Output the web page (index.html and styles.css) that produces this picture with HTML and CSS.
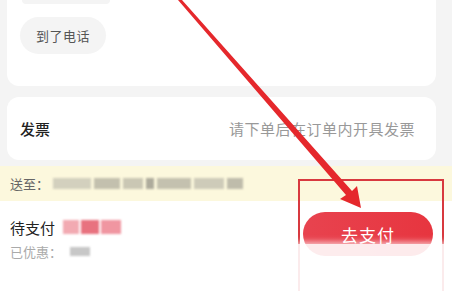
FILE: index.html
```html
<!DOCTYPE html>
<html lang="zh">
<head>
<meta charset="utf-8">
<link rel="stylesheet" href="styles.css">
</head>
<body>
<div class="page">
  <div class="card-top">
    <div class="chip-prev"></div>
    <div class="chip">到了电话</div>
  </div>
  <div class="card-invoice">
    <span class="inv-label">发票</span>
    <span class="inv-hint">请下单后在订单内开具发票</span>
  </div>
  <div class="addr">
    <span class="addr-label">送至：</span>
    <span class="blur-row">
      <i class="b b1"></i><i class="b b2"></i><i class="b b3"></i><i class="b b4"></i><i class="b b5"></i><i class="b b6"></i><i class="b b7"></i>
    </span>
  </div>
  <div class="pay">
    <div class="pay-info">
      <div class="pay-line">
        <span class="pay-label">待支付</span>
        <span class="price-blur"><i class="p p1"></i><i class="p p2"></i><i class="p p3"></i></span>
      </div>
      <div class="disc-line">
        <span class="disc-label">已优惠：</span>
        <span class="disc-blur"></span>
      </div>
    </div>
    <button class="pay-btn">去支付</button>
  </div>

  <div class="highlight-box"></div>
  <svg class="arrow" width="452" height="291" viewBox="0 0 452 291">
    <polygon points="178,0 182,0 352,191 357,186 361,208 340,199 346,195" fill="#e5282c"/>
  </svg>
  <div class="watermark"></div>
</div>
</body>
</html>
```
FILE: styles.css
```css
* { box-sizing: border-box; }
html, body { margin: 0; padding: 0; }
body {
  background: #f4f4f4;
  font-family: "Noto Sans CJK SC", "Noto Sans", sans-serif;
  width: 452px;
  height: 291px;
  overflow: hidden;
}
.page {
  position: relative;
  width: 452px;
  height: 291px;
  display: flex;
  flex-direction: column;
}
.card-top {
  margin-left: 7px;
  width: 429px;
  height: 86px;
  background: #fff;
  border-radius: 0 0 12px 12px;
  padding: 0 13px;
  display: flex;
  flex-direction: column;
  align-items: flex-start;
}
.chip-prev {
  width: 88px;
  height: 4px;
  background: #f4f4f4;
  border-radius: 0 0 10px 10px;
  margin-left: 2px;
}
.chip {
  margin-top: 13px;
  height: 37px;
  padding: 0 16px;
  border-radius: 19px;
  background: #f4f4f4;
  color: #555;
  font-size: 13px;
  display: flex;
  align-items: center;
  letter-spacing: 0.5px;
}
.card-invoice {
  margin-top: 11px;
  margin-left: 7px;
  width: 429px;
  height: 63px;
  background: #fff;
  border-radius: 12px;
  padding: 0 20px 0 13px;
  display: flex;
  align-items: center;
  justify-content: space-between;
}
.inv-label {
  font-size: 15px;
  font-weight: 500;
  color: #222;
}
.inv-hint {
  font-size: 15px;
  color: #999;
  letter-spacing: 0.5px;
  margin-right: 1px;
}
.addr {
  margin-top: 6px;
  height: 35px;
  background: #fcf8dd;
  display: flex;
  align-items: center;
  padding-left: 10px;
}
.addr-label {
  font-size: 13px;
  color: #666;
}
.blur-row {
  display: flex;
  align-items: center;
  gap: 3px;
  margin-left: 4px;
  filter: blur(1.3px);
}
.b { display: block; height: 11px; background: #c8c5b4; }
.b1 { width: 38px; background: #d3d0be; }
.b2 { width: 26px; background: #c3c0ae; }
.b3 { width: 20px; background: #cac7b4; }
.b4 { width: 8px; background: #aeab9c; }
.b5 { width: 34px; background: #c4c1af; }
.b6 { width: 30px; background: #cecbb9; }
.b7 { width: 16px; background: #bfbcab; }
.pay {
  flex: 1;
  background: #fff;
  display: flex;
  align-items: flex-start;
  justify-content: space-between;
  padding: 12px 19px 0 10px;
}
.pay-info {
  display: flex;
  flex-direction: column;
  gap: 2px;
  padding-top: 2px;
}
.pay-line {
  display: flex;
  align-items: center;
  gap: 8px;
  height: 24px;
}
.pay-label {
  font-size: 15px;
  color: #222;
}
.price-blur {
  display: flex;
  gap: 2px;
  filter: blur(1.3px);
}
.p { display: block; height: 14px; }
.p1 { width: 16px; background: #f2aab2; }
.p2 { width: 18px; background: #e8727f; }
.p3 { width: 20px; background: #f096a1; }
.disc-line {
  display: flex;
  align-items: center;
  height: 20px;
}
.disc-label {
  font-size: 13px;
  color: #aaa;
}
.disc-blur {
  width: 20px;
  height: 9px;
  margin-left: 8px;
  background: #c7c7c7;
  filter: blur(1px);
}
.pay-btn {
  margin-top: -1px;
  width: 130px;
  height: 44px;
  border: none;
  border-radius: 22px;
  background: linear-gradient(90deg, #e8434f, #e7353f);
  color: #fff;
  font-family: "Noto Sans CJK SC", sans-serif;
  font-size: 17px;
  padding: 0;
  letter-spacing: 1px;
}
.highlight-box {
  position: absolute;
  left: 298px;
  top: 179px;
  width: 146px;
  height: 120px;
  border: 2px solid #d8393f;
}
.arrow {
  position: absolute;
  left: 0;
  top: 0;
}
.watermark {
  position: absolute;
  left: 295px;
  top: 244px;
  width: 160px;
  height: 50px;
  background: rgba(255, 255, 255, 0.9);
  box-shadow: 0 0 6px 2px rgba(255, 255, 255, 0.7);
}
```
